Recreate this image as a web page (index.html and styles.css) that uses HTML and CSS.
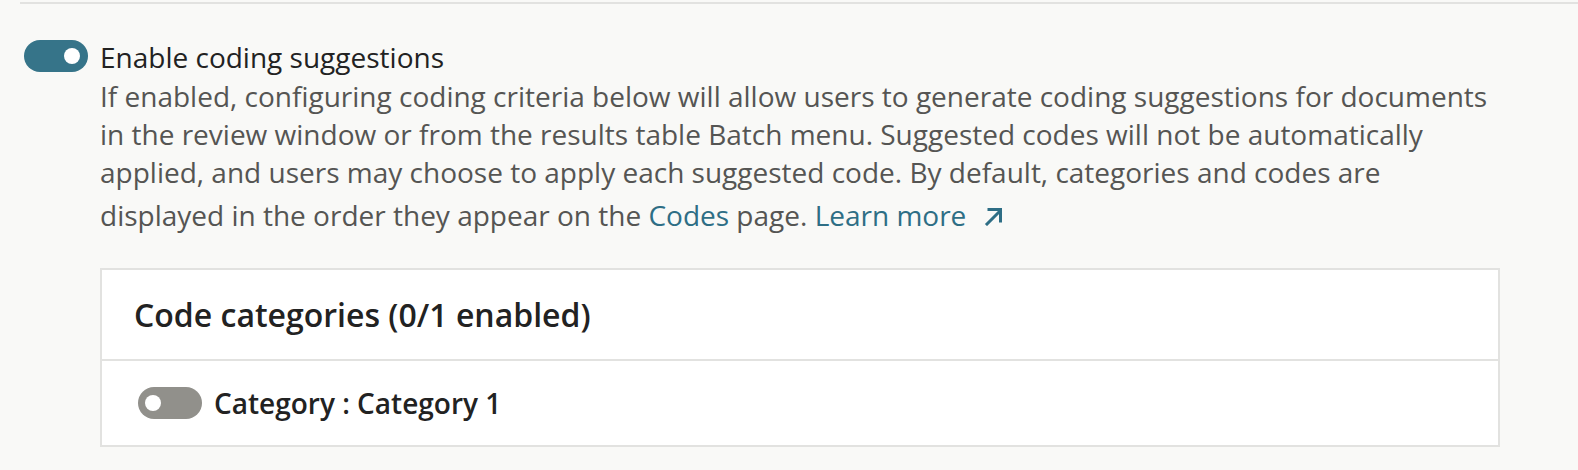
FILE: index.html
```html
<!DOCTYPE html>
<html lang="en">
<head>
<meta charset="utf-8">
<title>Coding suggestions</title>
<link rel="stylesheet" href="styles.css">
</head>
<body>
<div class="page">
  <div class="setting">
    <span class="toggle toggle-on" role="switch" aria-checked="true"><span class="knob"></span></span>
    <div class="setting-body">
      <div class="setting-label">Enable coding suggestions</div>
      <p class="setting-desc">If enabled, configuring coding criteria below will allow users to generate coding suggestions for documents in the review window or from the results table Batch menu. Suggested codes will not be automatically applied, and users may choose to apply each suggested code. By default, categories and codes are displayed in the order they appear on the <a class="link" href="#">Codes</a> page. <a class="link" href="#">Learn more<svg class="ext" viewBox="0 0 20 20" width="20" height="20" aria-hidden="true"><path d="M3 18 L16 5 M5 3.5 H16.5 V15" fill="none" stroke="currentColor" stroke-width="3" stroke-linecap="square"/></svg></a></p>
      <div class="card">
        <div class="card-header">Code categories (0/1 enabled)</div>
        <div class="card-row">
          <span class="toggle toggle-off" role="switch" aria-checked="false"><span class="knob"></span></span>
          <span class="row-label">Category : Category 1</span>
        </div>
      </div>
    </div>
  </div>
</div>
</body>
</html>
```

FILE: styles.css
```css
html, body {
  margin: 0;
  padding: 0;
  background: #f9f9f7;
}
body {
  font-family: "Open Sans", "Noto Sans", sans-serif;
  color: #222;
}
.page {
  margin-left: 20px;
  padding-top: 2px;
}
.page::before {
  content: "";
  display: block;
  height: 2px;
  background: #e2e2e0;
}
.setting {
  display: flex;
  align-items: flex-start;
  gap: 12px;
  padding: 34px 78px 0 4px;
}
.setting > .toggle {
  margin-top: 2px;
}
.toggle {
  flex: none;
  width: 64px;
  height: 32px;
  border-radius: 16px;
  display: flex;
  align-items: center;
  box-sizing: border-box;
}
.toggle-on {
  background: #367489;
  justify-content: flex-end;
  padding-right: 8px;
}
.toggle-off {
  background: #91908b;
  justify-content: flex-start;
  padding-left: 7px;
}
.knob {
  width: 16px;
  height: 16px;
  border-radius: 50%;
  background: #fff;
}
.setting-body {
  flex: 1;
  min-width: 0;
}
.setting-label {
  font-size: 28px;
  line-height: 38px;
  color: #222;
}
.setting-desc {
  margin: 1px 0 0 0;
  font-size: 28px;
  line-height: 38px;
  color: #555553;
}
.link {
  color: #2e6e85;
  text-decoration: none;
}
.ext {
  display: inline-block;
  vertical-align: baseline;
  margin: 15px 0 0 18px;
}
.card {
  margin-top: 34px;
  background: #fff;
  border: 2px solid #e2e2e0;
}
.card-header {
  height: 89px;
  display: flex;
  align-items: center;
  padding: 0 32px;
  font-size: 32px;
  font-weight: 600;
  color: #222;
  border-bottom: 2px solid #e2e2e0;
}
.card-row {
  height: 84px;
  display: flex;
  align-items: center;
  gap: 12px;
  padding: 0 36px;
}
.row-label {
  font-size: 28px;
  font-weight: 600;
  color: #222;
}
```
